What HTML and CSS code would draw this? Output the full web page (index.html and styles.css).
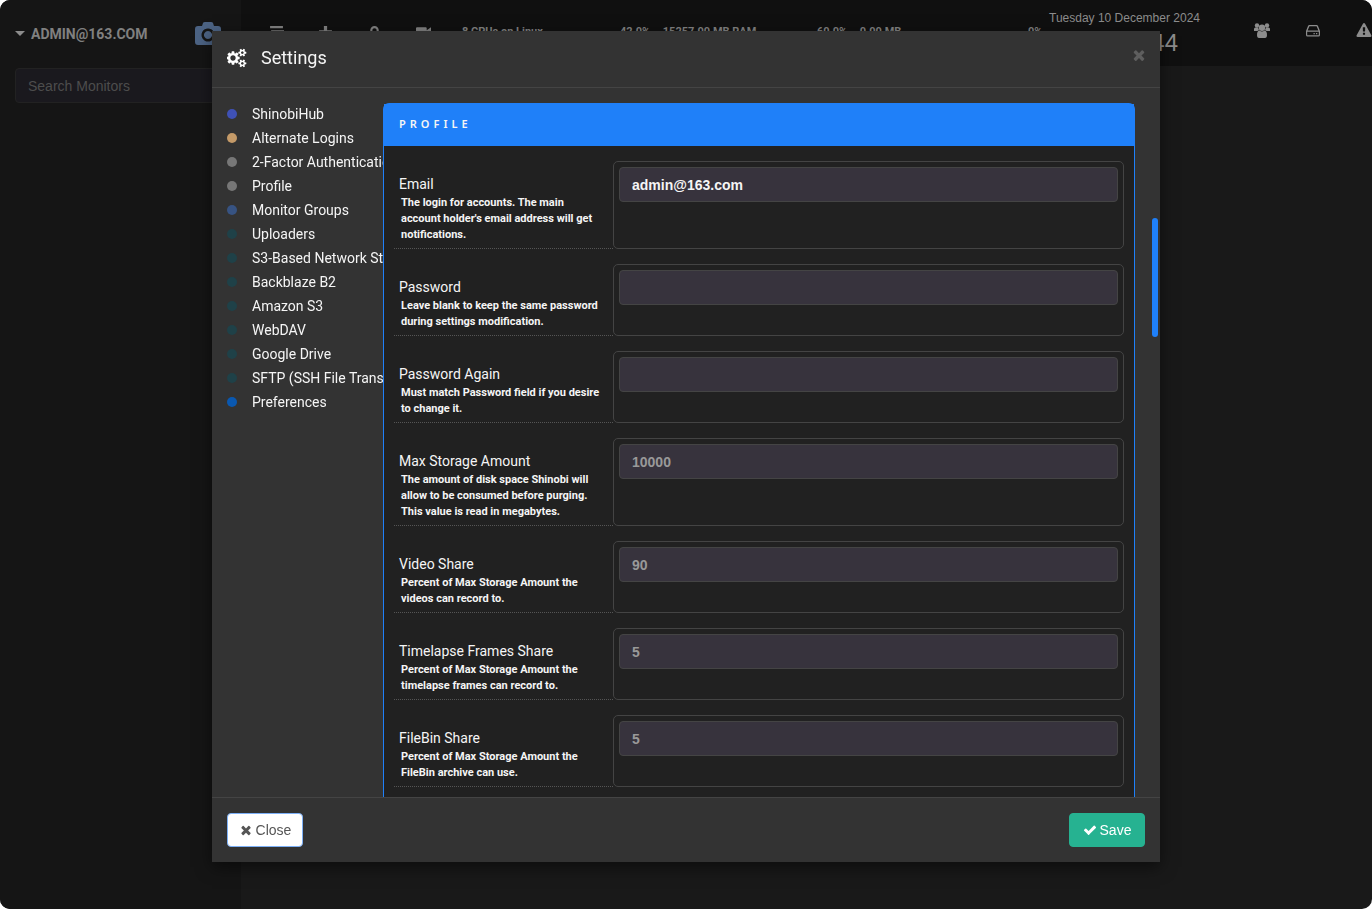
FILE: index.html
```
<!DOCTYPE html>
<html lang="en">
<head>
<meta charset="utf-8">
<title>Settings</title>
<link rel="stylesheet" href="styles.css">
</head>
<body>
<svg class="defs" aria-hidden="true">
  <symbol id="times" viewBox="0 0 1792 1792"><path d="M1490 1322q0 40-28 68l-136 136q-28 28-68 28t-68-28l-294-294-294 294q-28 28-68 28t-68-28l-136-136q-28-28-28-68t28-68l294-294-294-294q-28-28-28-68t28-68l136-136q28-28 68-28t68 28l294 294 294-294q28-28 68-28t68 28l136 136q28 28 28 68t-28 68l-294 294 294 294q28 28 28 68z"/></symbol>
</svg>
<div class="app">
  <aside class="side">
    <div class="account">
      <button class="user" type="button"><span class="caret"></span>ADMIN@163.COM</button>
      <svg class="camera" viewBox="0 0 26 24"><path fill-rule="evenodd" d="M3 4h4l1-3q.4-1 2-1h6q1.600 0 2 1l1 3h4q3 0 3 3v13q0 3-3 3H3q-3 0-3-3V7q0-3 3-3zM13 6.500a6.500 6.500 0 1 0 .01 0zM13 9a4 4 0 1 1-.01 0z"/></svg>
    </div>
    <input class="search" type="text" placeholder="Search Monitors" aria-label="Search Monitors">
  </aside>
  <main class="main">
    <header class="topbar">
      <nav class="tools">
        <svg viewBox="0 0 14 14"><path d="M1 1h12v2H1zM2 5h12v2H2zM1 9h12v2H1z"/></svg>
        <svg viewBox="0 0 14 14"><path d="M5.500 1h3v4H13v3H8.500v5h-3V8H1V5h4.500z"/></svg>
        <svg viewBox="0 0 14 14"><path fill-rule="evenodd" d="M7 1a4 4 0 0 1 4 4q0 2-4 9-4-7-4-9a4 4 0 0 1 4-4zm0 2a2 2 0 1 0 .01 0z"/></svg>
        <svg viewBox="0 0 14 14"><path d="M1 2h8q1 0 1 1v2l4-3v9l-4-3v2q0 1-1 1H1q-1 0-1-1V3q0-1 1-1z"/></svg>
      </nav>
      <div class="stats">
        <span>8 CPUs on Linux</span><span>42.0% &nbsp;- 15257.00 MB RAM</span><span>60.0% &nbsp;- 0.00 MB</span><span>0%</span>
      </div>
      <div class="clock"><div>Tuesday 10 December 2024</div><time>10:24:44</time></div>
      <nav class="links">
        <svg viewBox="0 0 16 15"><circle cx="3" cy="2.500" r="2.200"/><circle cx="13" cy="2.500" r="2.200"/><path d="M0 8V6q0-1.500 1.500-1.500H4L5 7 3.500 8zM16 8V6q0-1.500-1.500-1.500H12L11 7l1.500 1z"/><circle cx="8" cy="4.800" r="3.200"/><path d="M3 12q0-4.500 2.600-4.500Q8 9.500 10.400 7.500 13 7.500 13 12q0 3-2 3H5q-2 0-2-3z"/></svg>
        <svg viewBox="0 0 16 15"><path fill-rule="evenodd" d="M4.500 2h7q1.200 0 1.600 1.200L15 8v4q0 1.500-1.500 1.500h-11Q1 13.500 1 12V8l1.900-4.800Q3.300 2 4.500 2zM4.400 3.200 2.600 7.500h10.800l-1.800-4.300zM2.200 8.700v3.600h11.600V8.700zM8.500 10h1.300v1.300H8.500zM11 10h1.300v1.300H11z"/></svg>
        <svg viewBox="0 0 1792 1792"><path d="M1024 1375v-190q0-14-9.500-23.500t-22.500-9.500h-192q-13 0-22.500 9.500t-9.500 23.500v190q0 14 9.500 23.500t22.500 9.500h192q13 0 22.500-9.500t9.500-23.500zm-2-374l18-459q0-12-10-19-13-11-24-11h-220q-11 0-24 11-10 7-10 21l17 457q0 10 10 16.500t24 6.500h185q14 0 23.500-6.500t10.500-16.500zm-14-934l768 1408q35 63-2 126-17 29-46.500 46t-63.500 17h-1536q-34 0-63.500-17t-46.500-46q-37-63-2-126l768-1408q17-31 47-49t65-18 65 18 47 49z"/></svg>
      </nav>
    </header>
  </main>
</div>

<div class="overlay">
  <form class="modal" role="dialog" aria-labelledby="title">
    <header class="modal-head">
      <svg class="cogs" viewBox="0 0 1920 1792"><path d="M832 896q0-106-75-181t-181-75-181 75-75 181 75 181 181 75 181-75 75-181zm768 512q0-52-38-90t-90-38-90 38-38 90q0 53 37.500 90.500t90.500 37.500 90.500-37.500 37.500-90.500zm0-1024q0-52-38-90t-90-38-90 38-38 90q0 53 37.500 90.500t90.500 37.500 90.500-37.500 37.500-90.500zm-384 421v185q0 10-7 19.500t-16 10.500l-155 24q-11 35-32 76 34 48 90 115 7 11 7 20 0 12-7 19-23 30-82.500 89.500t-78.500 59.500q-11 0-21-7l-115-90q-37 19-77 31-11 108-23 155-7 24-30 24h-186q-11 0-20-7.500t-10-17.500l-23-153q-34-10-75-31l-118 89q-7 7-20 7-11 0-21-8-144-133-144-160 0-9 7-19 10-14 41-53t47-61q-23-44-35-82l-152-24q-10-1-17-9.500t-7-19.500v-185q0-10 7-19.500t16-10.500l155-24q11-35 32-76-34-48-90-115-7-11-7-20 0-12 7-20 22-30 82-89t79-59q11 0 21 7l115 90q34-18 77-32 11-108 23-154 7-24 30-24h186q11 0 20 7.500t10 17.500l23 153q34 10 75 31l118-89q8-7 20-7 11 0 21 8 144 133 144 160 0 8-7 19-12 16-42 54t-45 60q23 48 34 82l152 23q10 2 17 10.500t7 19.500zm640 533v140q0 16-149 31-12 27-30 52 51 113 51 138 0 4-4 7-122 71-124 71-8 0-46-47t-52-68q-20 2-30 2t-30-2q-14 21-52 68t-46 47q-2 0-124-71-4-3-4-7 0-25 51-138-18-25-30-52-149-15-149-31v-140q0-16 149-31 13-29 30-52-51-113-51-138 0-4 4-7 4-2 35-20t59-34 30-16q8 0 46 46.500t52 67.500q20-2 30-2t30 2q51-71 92-112l6-2q4 0 124 70 4 3 4 7 0 25-51 138 17 23 30 52 149 15 149 31zm0-1024v140q0 16-149 31-12 27-30 52 51 113 51 138 0 4-4 7-122 71-124 71-8 0-46-47t-52-68q-20 2-30 2t-30-2q-14 21-52 68t-46 47q-2 0-124-71-4-3-4-7 0-25 51-138-18-25-30-52-149-15-149-31v-140q0-16 149-31 13-29 30-52-51-113-51-138 0-4 4-7 4-2 35-20t59-34 30-16q8 0 46 46.500t52 67.500q20-2 30-2t30 2q51-71 92-112l6-2q4 0 124 70 4 3 4 7 0 25-51 138 17 23 30 52 149 15 149 31z"/></svg>
      <h1 id="title">Settings</h1>
      <button class="dismiss" type="button" aria-label="Dismiss"><svg><use href="#times"/></svg></button>
    </header>
    <div class="modal-body">
      <nav class="sections">
        <a href="#" class="indigo">ShinobiHub</a>
        <a href="#" class="tan">Alternate Logins</a>
        <a href="#" class="grey">2-Factor Authentication</a>
        <a href="#" class="grey">Profile</a>
        <a href="#" class="navy">Monitor Groups</a>
        <a href="#" class="teal">Uploaders</a>
        <a href="#" class="teal">S3-Based Network Storage</a>
        <a href="#" class="teal">Backblaze B2</a>
        <a href="#" class="teal">Amazon S3</a>
        <a href="#" class="teal">WebDAV</a>
        <a href="#" class="teal">Google Drive</a>
        <a href="#" class="teal">SFTP (SSH File Transfer)</a>
        <a href="#" class="blue">Preferences</a>
      </nav>
      <section class="panel">
        <h2>PROFILE</h2>
        <div class="rows">
          <div class="row"><label for="f1">Email<small>The login for accounts. The main account holder's email address will get notifications.</small></label><div class="field"><input id="f1" type="text" value="admin@163.com"></div></div>
          <div class="row"><label for="f2">Password<small>Leave blank to keep the same password during settings modification.</small></label><div class="field"><input id="f2" type="password"></div></div>
          <div class="row"><label for="f3">Password Again<small>Must match Password field if you desire to change it.</small></label><div class="field"><input id="f3" type="password"></div></div>
          <div class="row"><label for="f4">Max Storage Amount<small>The amount of disk space Shinobi will allow to be consumed before purging. This value is read in megabytes.</small></label><div class="field"><input id="f4" type="text" placeholder="10000"></div></div>
          <div class="row"><label for="f5">Video Share<small>Percent of Max Storage Amount the videos can record to.</small></label><div class="field"><input id="f5" type="text" placeholder="90"></div></div>
          <div class="row"><label for="f6">Timelapse Frames Share<small>Percent of Max Storage Amount the timelapse frames can record to.</small></label><div class="field"><input id="f6" type="text" placeholder="5"></div></div>
          <div class="row"><label for="f7">FileBin Share<small>Percent of Max Storage Amount the FileBin archive can use.</small></label><div class="field"><input id="f7" type="text" placeholder="5"></div></div>
        </div>
      </section>
      <div class="thumb"></div>
    </div>
    <footer class="modal-foot">
      <button class="btn close" type="button"><svg><use href="#times"/></svg>Close</button>
      <button class="btn save" type="submit"><svg viewBox="0 0 1792 1792"><path d="M1671 566q0 40-28 68l-724 724-136 136q-28 28-68 28t-68-28l-136-136-362-362q-28-28-28-68t28-68l136-136q28-28 68-28t68 28l294 295 656-657q28-28 68-28t68 28l136 136q28 28 28 68z"/></svg>Save</button>
    </footer>
  </form>
</div>
</body>
</html>
```
FILE: styles.css
```
* { box-sizing: border-box; }
body { margin: 0; background: #fff; color: #f5f5f5; font: 14px/18px Roboto, "Liberation Sans", sans-serif; overflow: hidden; }
button, input { font: 14px/18px "Liberation Sans", Arial, sans-serif; }
svg { display: block; fill: currentColor; }
.defs { display: none; }

.app { display: flex; height: 100vh; border-radius: 10px; overflow: hidden; background: #191919; }
.side { width: 241px; padding: 15px; background: #151515; color: #8c8c8c; }
.account { display: flex; align-items: center; justify-content: space-between; height: 37px; margin-bottom: 16px; }
.user { display: flex; align-items: center; gap: 6px; padding: 0; border: 0; background: none; color: #808080; font-family: Roboto, sans-serif; font-weight: 700; }
.caret { border: 5px solid transparent; border-top-color: #8c8c8c; border-bottom: 0; }
.camera { width: 26px; height: 24px; margin-right: 5px; color: #4c6384; }
.search { width: 100%; height: 35px; padding: 0 12px; border: 1px solid #222; border-radius: 4px; background: #1a191e; color: #8c8c8c; }
.search::placeholder { color: #4d4d4d; opacity: 1; }

.main { flex: 1; min-width: 0; }
.topbar { display: flex; height: 66px; background: #101010; color: #808080; }
.tools { display: flex; gap: 34px; padding: 25px 0 0 28px; }
.tools svg { width: 15px; height: 15px; }
.stats { display: grid; grid-template-columns: 158px 197px 211px 1fr; flex: 1; padding: 25px 0 0 31px; font-size: 11px; line-height: 14px; font-weight: 700; white-space: nowrap; }
.clock { width: 151px; padding-top: 9px; margin-right: 54px; font: 12px/18px "Liberation Sans", sans-serif; white-space: nowrap; text-align: center; color: #8c8c8c; }
.clock time { display: block; padding-right: 22px; text-align: right; font-size: 24px; line-height: 32px; }
.links { display: flex; gap: 35px; padding-top: 23px; color: #8c8c8c; }
.links svg { flex: none; width: 16px; height: 15px; }

.overlay { position: fixed; inset: 0; display: flex; justify-content: center; align-items: flex-start; padding-top: 31px; }
.modal { width: 100%; max-width: 948px; background: #333; box-shadow: 0 5px 15px rgba(0, 0, 0, .5); }
.modal-head { display: flex; align-items: center; gap: 14px; height: 57px; padding: 0 13px 3px 15px; border-bottom: 1px solid #444; }
.cogs { width: 20px; height: 20px; color: #fff; }
h1 { flex: 1; margin: 0; font-size: 18px; line-height: 24px; font-weight: 400; }
.dismiss { align-self: flex-start; padding: 16px 0; border: 0; background: none; color: #5e5e5e; }
.dismiss svg { width: 16px; height: 16px; }
.modal-body { position: relative; display: flex; height: calc(100vh - 200px); padding: 15px 25px 0 15px; overflow: hidden; }
.sections { flex: none; width: 156px; margin-top: -1px; overflow: hidden; }
.sections a { display: flex; align-items: center; gap: 15px; height: 24px; color: #f5f5f5; text-decoration: none; white-space: nowrap; }
.sections a::before { content: ""; flex: none; width: 10px; height: 10px; border-radius: 50%; background: #777; }
.sections .indigo::before { background: #3f51b5; }
.sections .tan::before { background: #c49a68; }
.sections .navy::before { background: #375382; }
.sections .teal::before { background: #1f4148; }
.sections .blue::before { background: #0a58b0; }

.panel { flex: 1; align-self: flex-start; min-height: 1200px; border: 1px solid #1f80f9; border-radius: 6px; background: #212121; }
h2 { margin: 0; padding: 11px 15px 13px; background: #1f80f9; font: 600 11px/18px "Noto Sans", sans-serif; letter-spacing: 4px; }
.rows { display: grid; gap: 15px; padding: 15px 10px; }
.row { display: grid; grid-template-columns: 3fr 7fr; }
.row label { padding: 14px 5px 5px; border-bottom: 1px dotted #555; }
.row small { display: block; margin-top: 2px; padding: 0 5px 0 2px; font-size: 11px; line-height: 16px; font-weight: 700; }
.field { padding: 5px; border: 1px solid #444; border-radius: 5px; }
.field input { display: block; width: 100%; height: 35px; padding: 0 12px; border: 1px solid #444; border-radius: 4px; background: #37333d; color: #f5f5f5; font-weight: 700; }
.field input::placeholder { color: #999; opacity: 1; }
.thumb { position: absolute; top: 130px; right: 2px; width: 6px; height: 119px; border-radius: 3px; background: #1f80f9; }

.modal-foot { display: flex; justify-content: space-between; padding: 15px; border-top: 1px solid #444; }
.btn { display: flex; align-items: center; justify-content: center; gap: 3px; min-width: 76px; height: 34px; padding: 0 10px; border: 1px solid; border-radius: 4px; }
.btn svg { width: 14px; height: 14px; }
.close { border-color: #7db0f7; background: #fff; color: #555; }
.save { border-color: #26b291; background: #26b291; color: #fff; }
```
